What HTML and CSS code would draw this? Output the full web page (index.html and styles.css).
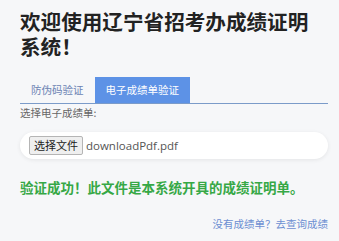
FILE: index.html
```html
<!DOCTYPE html>
<html lang="zh-CN">
<head>
    <meta charset="UTF-8">
    <meta name="viewport" content="width=device-width, initial-scale=1.0">
    <title>辽宁省招考办成绩证明系统</title>
    <link rel="stylesheet" href="styles.css">
</head>
<body>
    <div class="page">
        <h1 class="title">欢迎使用辽宁省招考办成绩证明系统！</h1>

        <div class="tabs">
            <div class="tab">防伪码验证</div>
            <div class="tab active">电子成绩单验证</div>
        </div>

        <div class="upload">
            <label class="upload-label">选择电子成绩单:</label>
            <div class="file-box">
                <span class="file-button">选择文件</span>
                <span class="file-name">downloadPdf.pdf</span>
            </div>
        </div>

        <p class="result success">验证成功！此文件是本系统开具的成绩证明单。</p>

        <div class="footer-link">
            <a href="#">没有成绩单？去查询成绩</a>
        </div>
    </div>
</body>
</html>
```

FILE: styles.css
```css
* {
    margin: 0;
    padding: 0;
    box-sizing: border-box;
}

body {
    font-family: "Noto Sans CJK SC", "Noto Sans", sans-serif;
    background-color: #f6f7f9;
    color: #333;
}

.page {
    padding: 9px 11px 0 20px;
}

.title {
    font-size: 20.6px;
    font-weight: bold;
    line-height: 25px;
    color: #222;
}

.tabs {
    display: flex;
    margin-top: 18px;
    border-bottom: 1.5px solid #7b9bc9;
}

.tab {
    height: 26px;
    line-height: 26px;
    padding: 0 11px;
    font-size: 10.5px;
    color: #6c84b4;
}

.tab.active {
    background-color: #5d92e6;
    color: #fff;
}

.upload {
    display: flex;
    flex-direction: column;
}

.upload-label {
    font-size: 10.5px;
    line-height: 14px;
    margin-top: 2px;
    color: #666;
}

.file-box {
    display: flex;
    align-items: center;
    gap: 3px;
    height: 27px;
    margin-top: 12px;
    padding: 0 9px;
    background-color: #fff;
    border-radius: 14px;
    box-shadow: 0 1px 4px rgba(0, 0, 0, 0.08);
}

.file-button {
    height: 19px;
    line-height: 17px;
    padding: 0 4px;
    font-size: 11px;
    color: #222;
    background-color: #efefef;
    border: 1px solid #b5b5b5;
    border-radius: 2px;
}

.file-name {
    font-family: "Open Sans", "Noto Sans", sans-serif;
    font-size: 11.5px;
    color: #555;
}

.result {
    margin-top: 19px;
    font-size: 13.5px;
    font-weight: bold;
    line-height: 18px;
}

.result.success {
    color: #36a846;
}

.footer-link {
    display: flex;
    justify-content: flex-end;
    margin-top: 20px;
}

.footer-link a {
    font-size: 10.5px;
    color: #6d8fd2;
    text-decoration: none;
}
```
